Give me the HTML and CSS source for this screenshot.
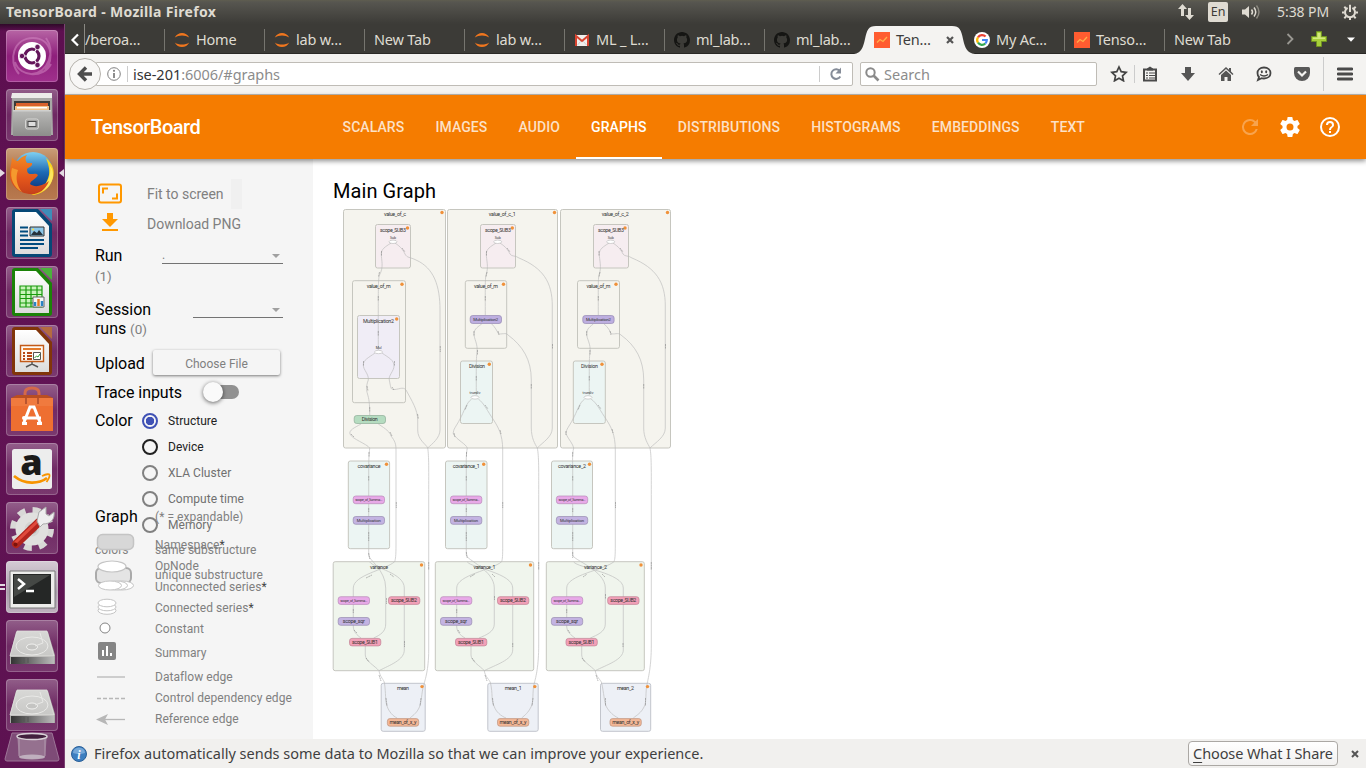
FILE: index.html
```html
<!DOCTYPE html>
<html lang="en">
<head>
<meta charset="utf-8">
<title>TensorBoard - Mozilla Firefox</title>
<link rel="stylesheet" href="styles.css">
</head>
<body>
<svg class="defs" width="0" height="0">
  <defs>
    <linearGradient id="fileGrad" x1="0" y1="0" x2="0" y2="1"><stop offset="0" stop-color="#b9b9b7"/><stop offset="1" stop-color="#8d8d8b"/></linearGradient>
    <linearGradient id="fxGlobe" x1="0" y1="0" x2="0" y2="1"><stop offset="0" stop-color="#7fd0f2"/><stop offset=".5" stop-color="#1e6bb5"/><stop offset="1" stop-color="#0b2f75"/></linearGradient>
    <linearGradient id="fxFox" x1="0" y1="0" x2="0" y2="1"><stop offset="0" stop-color="#f08a24"/><stop offset=".6" stop-color="#e4561b"/><stop offset="1" stop-color="#c5401a"/></linearGradient>
    <linearGradient id="page" x1="0" y1="0" x2="0" y2="1"><stop offset="0" stop-color="#fff"/><stop offset="1" stop-color="#dcdcdc"/></linearGradient>
    <linearGradient id="disk" x1="0" y1="0" x2="0" y2="1"><stop offset="0" stop-color="#dededc"/><stop offset="1" stop-color="#bdbdbb"/></linearGradient>
    <linearGradient id="diskFront" x1="0" y1="0" x2="1" y2="0"><stop offset="0" stop-color="#333"/><stop offset="1" stop-color="#bbb"/></linearGradient>
    <linearGradient id="driveTop" x1="0" y1="0" x2="0" y2="1"><stop offset="0" stop-color="#d8d8d6"/><stop offset="1" stop-color="#c8c8c6"/></linearGradient>
    <symbol id="jupyter" viewBox="0 0 16 16"><path d="M.8 5.6C3.600-.4 12.400-.4 15.200 5.600 11.500 2.900 4.500 2.900.8 5.600zM.8 10.400c2.800 6 11.600 6 14.400 0-3.700 2.700-10.700 2.700-14.400 0z" fill="#f0761e"/></symbol>
    <symbol id="github" viewBox="0 0 16 16"><path fill="#151513" d="M8 0C3.580 0 0 3.580 0 8c0 3.540 2.290 6.530 5.470 7.590.4.070.55-.17.55-.38 0-.19-.01-.82-.01-1.490-2.010.37-2.530-.49-2.690-.94-.09-.23-.48-.94-.82-1.130-.28-.15-.68-.52-.01-.53.63-.01 1.080.58 1.230.82.72 1.210 1.870.87 2.330.66.07-.52.28-.87.51-1.070-1.780-.2-3.640-.89-3.640-3.950 0-.87.31-1.590.82-2.150-.08-.2-.36-1.020.08-2.120 0 0 .67-.21 2.200.82a7.400 7.400 0 0 1 4 0c1.530-1.040 2.200-.82 2.200-.82.44 1.100.16 1.920.08 2.120.51.56.82 1.270.82 2.150 0 3.070-1.870 3.750-3.650 3.950.29.25.54.73.54 1.480 0 1.070-.01 1.930-.01 2.200 0 .21.15.46.55.38A8 8 0 0 0 16 8c0-4.420-3.580-8-8-8z"/></symbol>
    <symbol id="tb" viewBox="0 0 16 16"><path d="M0 0h16v16H0z" fill="#ff5c30"/><path d="M3 10.500l3-3 3 2 4-4.500" fill="none" stroke="#ffb04a" stroke-width="1.300"/></symbol>
    <symbol id="drive" viewBox="0 0 52 52"><path d="M10 12h32l7 23v9H4v-9z" fill="#aaa9a7"/><path d="M11 11h30l7 25H4z" fill="url(#driveTop)" stroke="#e2e2e0" stroke-width=".8"/><path d="M5 37h43v7H5z" fill="url(#diskFront)"/><ellipse cx="26" cy="26" rx="16" ry="9" fill="none" stroke="#e9e9e7"/><ellipse cx="26" cy="27" rx="5.500" ry="3" fill="#c4c4c2" stroke="#f0f0ee"/><path d="M34 13l3 10-8 3" fill="none" stroke="#e9e9e7"/><path d="M18 38v5m4-5v5" stroke="#555"/></symbol>
  </defs>
</svg>

<header class="menubar">
  <span class="win-title">TensorBoard - Mozilla Firefox</span>
  <div class="indicators">
    <svg class="i-net" width="18" height="18" viewBox="0 0 18 18"><path d="M5.500 1L1 6h3v7h3V6h3zM12.500 17l4.500-5h-3V5h-3v7H8z" fill="#dfdbd2"/></svg>
    <span class="lang">En</span>
    <svg class="i-vol" width="20" height="16" viewBox="0 0 20 16"><path d="M1 5.500h3L8 2v12L4 10.500H1z" fill="#dfdbd2"/><path d="M10.500 5.500q2 2.500 0 5M13 3.500q3.500 4.500 0 9" fill="none" stroke="#dfdbd2" stroke-width="1.500"/><path d="M15.500 1.500q5 6.500 0 13" fill="none" stroke="#8c8980" stroke-width="1.400"/></svg>
    <span class="clock">5:38 PM</span>
    <svg class="i-gear" width="16" height="16" viewBox="0 0 16 16"><g stroke="#dfdbd2" fill="none"><path d="M5.600 3.800a5 5 0 1 0 4.800 0" stroke-width="2"/><path d="M8 .8V8" stroke-width="2"/><path d="M0 8.500h2.500M13.500 8.500H16M2.300 14.200l1.900-1.900M13.700 14.200l-1.900-1.900M2.300 2.800l1.900 1.900M13.700 2.800l-1.900 1.900M8 13.500V16" stroke-width="2"/></g></svg>
  </div>
</header>

<div class="desktop">
<nav class="launcher">
  <div class="tile t-dash"><svg viewBox="0 0 52 52"><path d="M13 44C1 30 8 8 27 8s22 22 12 32M45 34C38 48 14 48 9 32M40 8c10 14 2 34-14 36" fill="none" stroke="#d58cc5" stroke-width="2" opacity=".5"/><circle cx="26" cy="26" r="14" fill="#fff"/><circle cx="26" cy="26" r="7" fill="none" stroke="#63155a" stroke-width="3.200"/><path d="M26 26L14 26M26 26l7 11M26 26l7-11" stroke="#fff" stroke-width="1.200"/><g fill="#63155a" stroke="#fff" stroke-width=".7"><circle cx="16" cy="26" r="2.700"/><circle cx="31.500" cy="17" r="2.700"/><circle cx="31.500" cy="35" r="2.700"/></g></svg></div>
  <div class="tile"><svg viewBox="0 0 52 52"><path d="M6 5h40l1 41H5z" fill="#a8a8a6"/><path d="M6 4h40v5H5z" fill="#ecebe9"/><path d="M8 12h36v10H8z" fill="#3b3b39"/><path d="M10 14h32v8H10z" fill="#d9622d"/><path d="M9 17h34v5H9z" fill="#f2c28a"/><path d="M11 18h30v1.500H11z" fill="#fff"/><path d="M7 21h38v26H7z" fill="url(#fileGrad)"/><path d="M7 21h38v1.500H7z" fill="#d0d0ce"/><rect x="19.500" y="30" width="13" height="10" rx="2" fill="#a5a5a3" stroke="#d4d4d2"/><rect x="22" y="32.500" width="8" height="5" fill="#ddd" stroke="#4b4b4b"/></svg></div>
  <div class="tile t-fx"><svg viewBox="0 0 52 52"><circle cx="27" cy="24" r="20" fill="url(#fxGlobe)"/><path d="M40 10c7 6 9 13 7 20-3 10-11 17-22 17 12-5 16-12 18-20 1-6-1-12-3-17z" fill="#fbd31c"/><path d="M44 18c2 11-4 21-15 27 12-1 18-10 18-18 0-4-1-7-3-9z" fill="#fff07a" opacity=".7"/><path d="M6 9c1 2 3 4 6 4 2-3 5-5 9-6-2 3-2 5 0 8h5c1 3-3 4-5 6 0 3 1 5 4 5 3 0 5-1 7 1-3 5-7 5-8 9 5 4 12 2 19-3-4 10-11 14-20 13C9 44 3 34 4 24c0-6 2-10 2-15z" fill="url(#fxFox)"/><path d="M6 20c-3 10 2 20 10 24-5-6-7-14-4-22z" fill="#f59a2e"/></svg></div>
  <div class="tile"><svg viewBox="0 0 52 52"><path d="M9 2h23l14 15v30a3 3 0 0 1-3 3H9a3 3 0 0 1-3-3V5a3 3 0 0 1 3-3z" fill="#064876"/><path d="M9 5h21l13 14v28H9z" fill="url(#page)"/><path d="M34 2h12v12z" fill="#3e8db8"/><g stroke="#004c7f" stroke-width="1.800"><path d="M14 20.500h8M14 24.500h8M14 28.500h8M14 33h24M14 37h24M14 41h18"/></g><path d="M24 20h14v9H24z" fill="#8cc7e8" stroke="#333"/><path d="M25 28l3-4 3 2 2-3 4 5z" fill="#26323b"/><circle cx="27" cy="22.500" r="1" fill="#ffde3b"/></svg></div>
  <div class="tile"><svg viewBox="0 0 52 52"><path d="M9 2h23l14 15v30a3 3 0 0 1-3 3H9a3 3 0 0 1-3-3V5a3 3 0 0 1 3-3z" fill="#1b8208"/><path d="M9 5h21l13 14v28H9z" fill="url(#page)"/><path d="M34 2h12v12z" fill="#4bb13c"/><path d="M14 20h22v21H14z" fill="#c9f3bb"/><path d="M14 20h22v21H14zM14 24h22M14 28.500h22M14 32.500h22M14 37h22M20 20v21M25 20v21M31 20v21" fill="none" stroke="#189a0c" stroke-width="1.200"/><path d="M27 31h11v10H27z" fill="#f7f7f7" stroke="#666"/><path d="M29 40v-4M36 40v-5" stroke="#2b83c4" stroke-width="2.500"/><path d="M32.500 40v-7" stroke="#e47a24" stroke-width="2.500"/></svg></div>
  <div class="tile"><svg viewBox="0 0 52 52"><path d="M9 2h23l14 15v30a3 3 0 0 1-3 3H9a3 3 0 0 1-3-3V5a3 3 0 0 1 3-3z" fill="#81350a"/><path d="M9 5h21l13 14v28H9z" fill="url(#page)"/><path d="M34 2h12v12z" fill="#b46b40"/><path d="M14.500 20.500h23v16h-23z" fill="#fffaf3" stroke="#c25a18" stroke-width="1.400"/><path d="M17 24h18" stroke="#e37a2a" stroke-width="2"/><path d="M17 28h2M17 31h2M17 34h2M21 28h5M21 31h5M21 34h5" stroke="#b74916" stroke-width="1.800"/><path d="M27.500 27.500h7v7h-7z" fill="#fff" stroke="#555"/><path d="M28.500 33l2-2 1.500 1 2-3" fill="none" stroke="#2e9a35"/><path d="M26 37v3m-6 2l6-3 6 3" fill="none" stroke="#555" stroke-width="1.500"/></svg></div>
  <div class="tile"><svg viewBox="0 0 52 52"><path d="M19 18V9q0-5 7-5t7 5v9" fill="none" stroke="#d4694a" stroke-width="3"/><path d="M5 14l6-3h30l6 3z" fill="#b94e22"/><path d="M5 14h42v33H5z" fill="#ee6f31"/><path d="M5 14h42v8H5z" fill="#f07a3e"/><path d="M20 14v6M32 14v6" stroke="#b9552f" stroke-width="2"/><path d="M17.500 39.500L24 23h4l6.500 16.500" fill="none" stroke="#fff" stroke-width="3"/><path d="M16 39.500h5M31 39.500h5M18 34h17" stroke="#fff" stroke-width="3"/><circle cx="18" cy="34" r="2" fill="#fff"/></svg></div>
  <div class="tile"><svg viewBox="0 0 52 52"><rect x="6" y="6" width="40" height="40" rx="2.500" fill="#ededed"/><text x="25.500" y="32" class="amazon-a">a</text><path d="M8 33c11 9 25 8 33 2" fill="none" stroke="#f79400" stroke-width="2.800"/><path d="M36 33q7-3 7.500-1t-3 7" fill="none" stroke="#f79400" stroke-width="1.800"/></svg></div>
  <div class="tile"><svg viewBox="0 0 52 52"><circle cx="26" cy="27" r="18.500" fill="none" stroke="#d8d8d6" stroke-width="7" stroke-dasharray="7.500 7.030"/><circle cx="26" cy="27" r="12" fill="#d4d4d2" stroke="#e0e0de" stroke-width="9"/><circle cx="26" cy="27" r="5" fill="#ababa9"/><path d="M10 42l23-22" stroke="#b3251d" stroke-width="8" stroke-linecap="round"/><path d="M10 40l22-21" stroke="#e04a3c" stroke-width="3" stroke-linecap="round"/><path d="M31 19l2-9 7-5v7l3 2 5-4c1 7-3 12-11 12l-3 3z" fill="#eee" stroke="#aaa"/><circle cx="9.500" cy="42.500" r="2" fill="#7b120c"/></svg></div>
  <div class="tile t-term"><svg viewBox="0 0 52 52"><path d="M4 10h45v37H4z" fill="#ededeb" stroke="#777"/><path d="M7 13h38v30H7z" fill="#252726"/><path d="M8 14h36l-36 22z" fill="#454845"/><path d="M12 18l6 5-6 5M20 30h8" fill="none" stroke="#fff" stroke-width="2.500"/></svg></div>
  <div class="tile"><svg viewBox="0 0 52 52"><use href="#drive"/></svg></div>
  <div class="tile"><svg viewBox="0 0 52 52"><use href="#drive"/></svg></div>
  <svg class="trash" width="56" height="30" viewBox="0 0 56 30"><path d="M8 1h40l7 26q0 2-2 2H3q-2 0-2-2z" fill="#7e4b77" stroke="#9d7597"/><path d="M13 4h30l-2 21q-13 4-26 0z" fill="#95718f"/><ellipse cx="28" cy="4.500" rx="15" ry="3" fill="#41203d" stroke="#d9d2d8" stroke-width="1.500"/><path d="M15 7v17M41 7v17" stroke="#c0adbd" opacity=".7"/><ellipse cx="28" cy="25" rx="13" ry="2.500" fill="#d2cbd1" opacity=".7"/></svg>
  <i class="pip pip-l"></i><i class="pip pip-r"></i><i class="pip2"></i>
</nav>

<div class="browser">
  <div class="tabs">
    <div class="tab-scroll"><svg width="10" height="14" viewBox="0 0 10 14"><path d="M8 1.500L2.500 7 8 12.500" fill="none" stroke="#fff" stroke-width="2.200"/></svg></div>
    <div class="tab first"><span>/beroa…</span></div>
    <div class="tab"><svg width="16" height="16"><use href="#jupyter"/></svg><span>Home</span></div>
    <div class="tab"><svg width="16" height="16"><use href="#jupyter"/></svg><span>lab w…</span></div>
    <div class="tab"><span>New Tab</span></div>
    <div class="tab"><svg width="16" height="16"><use href="#jupyter"/></svg><span>lab w…</span></div>
    <div class="tab"><svg width="16" height="16" viewBox="0 0 16 16"><path d="M1 3h14v11H1z" fill="#f0efed"/><path d="M2 14V4l6 5 6-5v10" fill="none" stroke="#d8432f" stroke-width="2"/><path d="M3.500 13l3.500-4M12.500 13L9 9" stroke="#ccc"/></svg><span>ML _ L…</span></div>
    <div class="tab"><svg width="16" height="16"><use href="#github"/></svg><span>ml_lab…</span></div>
    <div class="tab nosep"><svg width="16" height="16"><use href="#github"/></svg><span>ml_lab…</span></div>
    <div class="tab active nosep">
      <svg class="tab-shape" width="122" height="29" viewBox="0 0 122 29"><path d="M0 28C7 27 9 22 11 13 13 4 14 0 22 0H98c8 0 9 4 11 13 2 9 4 14 12 15v1H0z" fill="#f4f3f1"/></svg>
      <svg width="16" height="16"><use href="#tb"/></svg><span>Ten…</span>
      <svg class="close" width="8" height="8" viewBox="0 0 8 8"><path d="M1 1l6 6M7 1L1 7" stroke="#555" stroke-width="2.200"/></svg>
    </div>
    <div class="tab"><svg width="16" height="16" viewBox="0 0 16 16"><circle cx="8" cy="8" r="8" fill="#fff"/><g fill="none" stroke-width="2.200"><path d="M4 5.300a4.800 4.800 0 0 1 7.600-.7" stroke="#ea4335"/><path d="M4 5.300a4.800 4.800 0 0 0 0 5.400" stroke="#fbbc05"/><path d="M4 10.700a4.800 4.800 0 0 0 7.300.8" stroke="#34a853"/><path d="M11.300 11.500A4.800 4.800 0 0 0 12.800 8H8" stroke="#4285f4"/></g></svg><span>My Ac…</span></div>
    <div class="tab"><svg width="16" height="16"><use href="#tb"/></svg><span>Tenso…</span></div>
    <div class="tab nosep"><span>New Tab</span></div>
    <div class="tab-tools">
      <svg width="8" height="12" viewBox="0 0 8 12"><path d="M1.500 1l5 5-5 5" fill="none" stroke="#9a9892" stroke-width="1.800"/></svg>
      <svg class="plus" width="16" height="16" viewBox="0 0 16 16"><path d="M5.500.5h5v5h5v5h-5v5h-5v-5h-5v-5h5z" fill="#a7cf3a" stroke="#6f9121"/><path d="M6.500 2h3v4.500H14v1.500H2V6.500h4.500z" fill="#d3ea7c"/></svg>
      <svg width="8" height="5" viewBox="0 0 8 5"><path d="M0 .5h8L4 4.800z" fill="#fff"/></svg>
    </div>
  </div>

  <div class="toolbar">
    <div class="back"><svg width="16" height="16" viewBox="0 0 16 16"><path d="M9 1.500L2.500 8 9 14.500M3 8h12" fill="none" stroke="#4d4d4d" stroke-width="3.400"/></svg></div>
    <div class="urlbar">
      <svg width="14" height="14" viewBox="0 0 14 14"><circle cx="7" cy="7" r="6.300" fill="none" stroke="#808080"/><path d="M7 6v5" stroke="#808080" stroke-width="1.800"/><circle cx="7" cy="3.800" r="1.100" fill="#808080"/></svg>
      <i class="bar"></i>
      <span class="url"><b>ise-201</b>:6006/#graphs</span>
      <i class="bar bar2"></i>
      <svg width="14" height="14" viewBox="0 0 14 14"><path d="M11 4.200A4.800 4.800 0 1 0 11.300 9.500" fill="none" stroke="#858c98" stroke-width="2"/><path d="M12 .5V6.500H6.500z" fill="#858c98"/></svg>
    </div>
    <div class="search"><svg width="15" height="15" viewBox="0 0 15 15"><circle cx="5.500" cy="5.500" r="4.200" fill="none" stroke="#8a8a8a" stroke-width="2"/><path d="M8.500 8.500l5 5" stroke="#8a8a8a" stroke-width="2.600"/></svg><span>Search</span></div>
    <div class="tools">
      <svg width="18" height="17" viewBox="0 0 18 17"><path d="M9 2l2.200 4.700 5 .6-3.700 3.500 1 5L9 13.300l-4.500 2.500 1-5L1.800 7.300l5-.6z" fill="none" stroke="#444" stroke-width="1.700"/></svg>
      <i class="bar"></i>
      <svg width="16" height="16" viewBox="0 0 16 16"><path d="M2 3.500h12v11H2z" fill="none" stroke="#4a4a4a" stroke-width="2"/><path d="M5 2.500L8 .5l3 2v2H5z" fill="#4a4a4a"/><path d="M4 7h2M4 9.500h2M4 12h2M7 7h6M7 9.500h6M7 12h6" stroke="#4a4a4a" stroke-width="1.100"/></svg>
      <svg width="16" height="16" viewBox="0 0 16 16"><path d="M5 1h6v6h4l-7 8-7-8h4z" fill="#555"/></svg>
      <svg width="16" height="16" viewBox="0 0 16 16"><path d="M8 1L.5 8l1 1L8 3l6.500 6 1-1L13 5.500V2h-2v1.700zM3 9l5-4.600L13 9v6H9.500v-4h-3v4H3z" fill="#555"/></svg>
      <svg width="16" height="16" viewBox="0 0 16 16"><path d="M8 1.500c4 0 6.500 2.400 6.500 5.500S12 12.500 8 12.500c-1 0-2 0-2.500-.3L2 14l1-3C1.800 10 1.500 8.500 1.500 7 1.500 4 4 1.500 8 1.500z" fill="none" stroke="#444" stroke-width="1.800"/><ellipse cx="5.800" cy="5.800" rx="1" ry="1.500" fill="#444"/><ellipse cx="10.200" cy="5.800" rx="1" ry="1.500" fill="#444"/><path d="M4 8.500q4 3 8 0" fill="none" stroke="#444" stroke-width="1.500"/></svg>
      <svg width="16" height="14" viewBox="0 0 16 14"><path d="M1.500 0h13Q16 0 16 1.500V6a8 8 0 0 1-16 0V1.500Q0 0 1.500 0z" fill="#585858"/><path d="M4 4.500l4 4 4-4" fill="none" stroke="#f4f3f1" stroke-width="2.200"/></svg>
      <i class="bar tall"></i>
      <svg width="16" height="14" viewBox="0 0 16 14"><path d="M1 2h14M1 7h14M1 12h14" stroke="#4a4a4a" stroke-width="2.800" stroke-linecap="round"/></svg>
    </div>
  </div>

  <div class="tb-header">
    <span class="brand">TensorBoard</span>
    <div class="tb-tabs">
      <span>SCALARS</span><span>IMAGES</span><span>AUDIO</span><span class="on">GRAPHS</span><span>DISTRIBUTIONS</span><span>HISTOGRAMS</span><span>EMBEDDINGS</span><span>TEXT</span>
    </div>
    <div class="tb-icons">
      <svg width="24" height="24" viewBox="0 0 24 24" opacity=".3"><path fill="#fff" d="M17.650 6.350A7.960 7.960 0 0 0 12 4a8 8 0 1 0 7.730 10h-2.080A6 6 0 1 1 12 6c1.660 0 3.140.69 4.220 1.780L13 11h7V4z"/></svg>
      <svg width="24" height="24" viewBox="0 0 24 24"><path fill="#fff" d="M19.430 12.980c.04-.32.070-.64.070-.98s-.03-.66-.07-.98l2.110-1.650c.19-.15.24-.42.12-.64l-2-3.460c-.12-.22-.39-.3-.61-.22l-2.490 1c-.52-.4-1.080-.73-1.690-.98l-.38-2.650A.49.49 0 0 0 14 2h-4c-.25 0-.46.18-.49.42l-.38 2.650c-.61.25-1.170.59-1.690.98l-2.490-1c-.23-.09-.49 0-.61.22l-2 3.460c-.13.22-.07.49.12.64l2.110 1.650c-.04.32-.07.65-.07.98s.03.66.07.98l-2.110 1.650c-.19.15-.24.42-.12.640l2 3.460c.12.22.39.3.61.22l2.490-1c.52.4 1.080.73 1.690.98l.38 2.650c.03.24.24.42.49.42h4c.25 0 .46-.18.49-.42l.38-2.650c.61-.25 1.170-.59 1.690-.98l2.490 1c.23.09.49 0 .61-.22l2-3.460c.12-.22.07-.49-.12-.64zM12 15.500a3.500 3.500 0 1 1 0-7 3.500 3.500 0 0 1 0 7z"/></svg>
      <svg width="24" height="24" viewBox="0 0 24 24"><path fill="#fff" d="M11 18h2v-2h-2v2zm1-16a10 10 0 1 0 0 20 10 10 0 0 0 0-20zm0 18a8 8 0 1 1 0-16 8 8 0 0 1 0 16zm0-14a4 4 0 0 0-4 4h2a2 2 0 1 1 4 0c0 2-3 1.750-3 5h2c0-2.250 3-2.500 3-5a4 4 0 0 0-4-4z"/></svg>
    </div>
  </div>

  <div class="content">
    <aside class="side">
      <div class="act"><svg width="30" height="30" viewBox="0 0 30 30"><rect x="4" y="5.500" width="22" height="18" rx="2" fill="none" stroke="#ff9800" stroke-width="2"/><path d="M8 14.500V9.500h5M22 14.500v5h-5" fill="none" stroke="#ff9800" stroke-width="2"/></svg><span>Fit to screen</span><i></i></div>
      <div class="act"><svg width="30" height="30" viewBox="0 0 30 30"><path d="M12 4h6v6h5l-8 8-8-8h5zM7 20h16v2H7z" fill="#ff9800"/></svg><span>Download PNG</span></div>
      <div class="field run"><div class="lab">Run<br><small>(1)</small></div><div class="drop w121"><span>.</span><svg width="8" height="4"><path d="M0 0h8L4 4z" fill="#a0a0a0"/></svg></div></div>
      <div class="field sess"><div class="lab">Session<br>runs <small>(0)</small></div><div class="drop w90"><span></span><svg width="8" height="4"><path d="M0 0h8L4 4z" fill="#a0a0a0"/></svg></div></div>
      <div class="field upload"><div class="lab">Upload</div><div class="choose">Choose File</div></div>
      <div class="field trace"><div class="lab">Trace inputs</div><div class="toggle"></div></div>
      <div class="field color"><div class="lab">Color</div>
        <ul class="radios"><li class="sel">Structure</li><li class="dev">Device</li><li>XLA Cluster</li><li>Compute time</li><li>Memory</li></ul>
      </div>
      <div class="swatches"><span class="colors">colors</span><span class="same">same substructure</span><span class="uniq">unique substructure</span><i></i></div>
      <div class="legend">
        <div class="lr r-title"><b>Graph</b><span>(* = expandable)</span></div>
        <div class="lr"><svg width="60" height="21" viewBox="0 0 60 21"><rect x="2.500" y="-.5" width="36" height="15" rx="5" fill="#d7d7d7" stroke="#c4c4c4" stroke-width="1.500"/></svg><span>Namespace<b>*</b></span></div>
        <div class="lr"><svg width="60" height="21" viewBox="0 0 60 21"><ellipse cx="17" cy="10.500" rx="14" ry="5.500" fill="#fff" stroke="#c4c4c4" stroke-width="1.200"/></svg><span>OpNode</span></div>
        <div class="lr"><svg width="60" height="21" viewBox="0 0 60 21"><g fill="#fff" stroke="#c4c4c4"><ellipse cx="27" cy="8.500" rx="11.500" ry="4.500"/><ellipse cx="21" cy="8.500" rx="11.500" ry="4.500"/><ellipse cx="15" cy="8.500" rx="11.500" ry="4.500"/></g></svg><span>Unconnected series<b>*</b></span></div>
        <div class="lr"><svg width="60" height="21" viewBox="0 0 60 21"><g fill="#fff" stroke="#c4c4c4"><ellipse cx="12" cy="12.500" rx="9" ry="3.800"/><ellipse cx="12" cy="9" rx="9" ry="3.800"/><ellipse cx="12" cy="5" rx="9" ry="3.800"/></g></svg><span>Connected series<b>*</b></span></div>
        <div class="lr"><svg width="60" height="21" viewBox="0 0 60 21"><circle cx="10" cy="9" r="5" fill="#fff" stroke="#848484"/></svg><span>Constant</span></div>
        <div class="lr tallrow"><svg width="60" height="24" viewBox="0 0 60 24"><rect x="3" y="2" width="18" height="18" rx="2" fill="#858585"/><path d="M8 16v-6M12 16V6M16 16v-3" stroke="#fff" stroke-width="2"/></svg><span>Summary</span></div>
        <div class="lr tallrow"><svg width="60" height="24" viewBox="0 0 60 24"><path d="M2 13h28" stroke="#b7b7b7" stroke-width="1.300"/></svg><span>Dataflow edge</span></div>
        <div class="lr"><svg width="60" height="21" viewBox="0 0 60 21"><path d="M2 10.500h28" stroke="#b7b7b7" stroke-width="1.300" stroke-dasharray="4 2"/></svg><span>Control dependency edge</span></div>
        <div class="lr"><svg width="60" height="21" viewBox="0 0 60 21"><path d="M8 10.500h22" stroke="#b7b7b7" stroke-width="1.300"/><path d="M1 10.500l12-5.500-3 5.500 3 5.500z" fill="#b7b7b7"/></svg><span>Reference edge</span></div>
      </div>
    </aside>

    <main class="graph">
      <h1>Main Graph</h1>
      <svg class="canvas" width="1053" height="534" viewBox="313 205 1053 534">
        <g class="box root"><rect x="343.500" y="209.500" width="102" height="238.500" rx="2"/><rect x="447.500" y="209.500" width="110" height="238.500" rx="2"/><rect x="560.500" y="209.500" width="110" height="238.500" rx="2"/></g>
        <g class="box pink"><rect x="375.500" y="224.500" width="35" height="43.500" rx="2"/><rect x="480.500" y="224.500" width="35" height="43.500" rx="2"/><rect x="593.500" y="224.500" width="35" height="43.500" rx="2"/></g>
        <g class="box root"><rect x="352.500" y="280.700" width="53" height="122" rx="2"/><rect x="465.300" y="280.700" width="41.400" height="67.600" rx="2"/><rect x="577.500" y="280.700" width="42" height="67.600" rx="2"/></g>
        <rect class="box lilac" x="357.500" y="315.500" width="42" height="63" rx="2"/>
        <g class="box teal"><rect x="460.500" y="361" width="32" height="62.500" rx="2"/><rect x="573.300" y="361" width="32" height="62.500" rx="2"/><rect x="348.300" y="461" width="41.300" height="87.700" rx="2"/><rect x="445.500" y="461" width="41.500" height="87.700" rx="2"/><rect x="551.500" y="461" width="41" height="87.700" rx="2"/></g>
        <g class="box green"><rect x="333.200" y="561.700" width="91.500" height="109" rx="2"/><rect x="435.300" y="561.700" width="98.400" height="109" rx="2"/><rect x="546.300" y="561.700" width="98" height="109" rx="2"/></g>
        <g class="box blue"><rect x="381.200" y="683.300" width="44" height="48" rx="2"/><rect x="487.800" y="683.300" width="50.400" height="48" rx="2"/><rect x="600.500" y="683.300" width="50.200" height="48" rx="2"/></g>

        <g class="edges">
          <path d="M391 243C385 247 381.300 249 381.300 254 381.300 260 384 267 379.500 275 378 279 378.300 290 378.300 350M395 243C401 247 403 250 405 254 407 258 410 257 416 260 434 268 440 286 440 310V430C440 438 432 444 427.700 448 429 456 428.700 470 428.700 500V650C428.700 670 425 680 424 684 421 694 422 702 419 708 416 714 412 716 410 718"/>
          <path d="M375 353C368 358 363.300 360 363.300 365 363.300 370 369 374 368.300 380 366 386 366.300 390 367.500 394 369 399 369.700 403 369.700 415M382 353C389 358 394 360 394 366 394 371 388 376 389.300 380 391 389 391 389 393 389.500 398 390 403 386 406 390 412 401 417.700 410 417.700 420V430C417.700 440 426 444 427.700 448"/>
          <path d="M361 424C354 428 349 430 350 434 352 439 367 444 369.700 448 369 455 368.700 460 368.700 470V555C368.700 560 385.700 570 385.700 588V624C385.700 632 380 635 373.700 638M369.700 562C374 568 404.300 573 404.300 588V650C404.300 660 390 665 379 670.700M378.300 424C386 429 390 432 391 436 395 441 396 444 396 450V545C396 556 395.500 559 394.700 561.700 385 570 353.300 575 353.300 588V626C353.300 632 357 635 361 638M365.300 646V655C365.300 661 375 666 379 670.700 380 677 384 680 384.500 683 386 694 385 700 387 706 389 712 393 716 397 718"/>
          <path d="M496 243C490 247 486.300 249 486.300 254 486.300 260 489 267 486 275 485 279 485.300 290 485.300 315M500 243C506 247 508 250 510 254 512 257 515 255 519 258 543 268 552.300 282 552.300 306V428C552.300 437 543 442 537.300 448 539 456 538.700 470 538.700 500V645C538.700 666 536 677 534.300 683 532 692 534 702 531 707 528 713 525 715 521.700 718"/>
          <path d="M481.700 324C476 328 474 330 474 334 474 339 478 344 477 352 476 358 476.300 375 476.300 395M491.700 324C495 327 497 331 498.300 333.500 501 335 506 332 508 335 523 346 531.300 360 531.300 380V428C531.300 438 535 444 537.300 448"/>
          <path d="M471.700 399C466 403 464 412 460 419 456 427 453 429 453.300 434 457 440 466 444 467.300 448 466 455 466.300 460 466.300 470V555C466.300 560 494.300 570 494.300 588V624C494.300 632 486 635 479 638M467.300 562C472 568 512.700 573 512.700 588V650C512.700 660 495 665 484.300 670.700M478.300 399C484 403 488 412 493 419 498 427 502.700 434 502.700 450V545C502.700 556 502.500 559 501.700 561.700 492 570 456.700 575 456.700 588V626C456.700 632 460 635 465 638M471 646V655C471 661 480 666 484.300 670.700 485 677 490 680 490.500 683 493 694 491 700 494 706 496 712 501 716 506 718"/>
          <path d="M609 243C603 247 599.300 249 599.300 254 599.300 260 602 267 599 275 598 279 598.300 290 598.300 315M613 243C619 247 621 250 623 254 625 257 628 255 632 258 656 268 665.300 282 665.300 306V428C665.300 437 656 442 650 448 651.500 456 651.300 470 651.300 500V645C651.300 666 648.500 677 647.300 683 645 692 647 702 644 707 641 713 637 715 633.300 718"/>
          <path d="M593.300 324C588 328 586.700 330 586.700 334 586.700 339 591 344 590 352 589 358 589.300 375 589.300 395M604 324C608 327 610 331 611 333.500 614 335 618 332 621 335 636 346 643.700 360 643.700 380V428C643.700 438 648 444 650 448"/>
          <path d="M584.700 399C579 403 577 412 573 419 569 427 566 429 566 434 569 440 573 444 573.700 448 572 455 572.700 460 572.700 470V555C572.700 560 605.300 570 605.300 588V624C605.300 632 597 635 590.300 638M573.700 562C578 568 623.300 573 623.300 588V650C623.300 660 606 665 595.300 670.700M591 399C597 403 601 412 606 419 611 427 615.300 434 615.300 450V545C615.300 556 615 559 614 561.700 604 570 566.700 575 566.700 588V626C566.700 632 571 635 575 638M581.700 646V655C581.700 661 591 666 595.300 670.700 596 677 601 680 601.700 683 604 694 604 700 606 706 609 712 614 716 618.300 718"/>
        </g>
        <g class="ticks">
          <path d="M381.500 251v5M379.500 272l-1 5M378.300 296v5M378.300 331v5M402 248l3 4M440.300 346v6M363.500 361v5M394.500 361v5M367 386l1 5M369.700 407v5M392 387l2 3M417.500 414l1 5M351 434l3 3M390 432l2 4M369 452v5M368.700 476v5M368.700 508v4M368.700 532v9M368.700 553l1 6M396.300 502v6M428.700 562v8M366 578l6-3M390 574l4 3M353.300 609v4M386.500 598v6M354 630l3 3M404.500 641v6M366 658l3 4M379 675l2 6M386 698l1 8M421 698l-1 8"/>
          <path d="M486.500 251v5M487 272l-1 5M485.300 296v5M507 248l3 4M552.500 344v5M474 331v5M477.500 350v5M498 331l1 4M531.300 384v5M476.300 376v5M467 405l-2 5M485 405l3 4M454 433l1 4M500 430l1 4M466.500 452v5M466.300 476v5M466.300 508v4M466.300 532v9M466.300 552l1 6M502.700 502v6M538.700 562v8M470 577l5-3M492 574l3 3M456.700 609v4M494.500 596v4M458 630l2 3M512.700 643v4M472 658l3 4M485 675l2 6M492.500 698l1 8M533 698l-1 8"/>
          <path d="M599 251v5M600 272l-1 5M598.300 296v5M620 248l3 4M665.500 344v5M586.700 331v5M590 350v5M610 331l1 4M643.700 384v5M589.300 376v5M580 405l-2 5M598 405l3 4M566 431v4M612 429l1 4M572.700 452v5M572.700 476v5M572.700 508v4M572.700 532v9M572.700 552v6M615.500 502v6M651.300 562v8M583 577l4-3M602 574l3 3M566.700 609v4M605.500 594v5M568 630l2 3M623 643v4M582 658l3 4M596 675l2 6M605.500 698v8M645.500 698v8"/>
        </g>
        <g class="ops"><ellipse cx="393" cy="241.800" rx="4" ry="1.700"/><ellipse cx="497.700" cy="241.800" rx="4" ry="1.700"/><ellipse cx="610.700" cy="241.800" rx="4" ry="1.700"/><ellipse cx="378.500" cy="352" rx="4" ry="1.700"/><ellipse cx="475" cy="397.400" rx="4" ry="1.700"/><ellipse cx="588" cy="397.400" rx="4" ry="1.700"/></g>

        <rect class="pill p-green" x="354.200" y="415.500" width="31.300" height="8" rx="2.500"/>
        <g class="pill p-purple"><rect x="470.200" y="315.500" width="31.300" height="8" rx="2.500"/><rect x="582.800" y="315.500" width="31.300" height="8" rx="2.500"/></g>
        <g class="pill p-mag"><rect x="353.200" y="496" width="31.300" height="7.700" rx="2.500"/><rect x="450.500" y="496" width="31.300" height="7.700" rx="2.500"/><rect x="556.400" y="496" width="31.300" height="7.700" rx="2.500"/><rect x="338.200" y="596.700" width="31.300" height="7.700" rx="2.500"/><rect x="440.500" y="596.700" width="31.300" height="7.700" rx="2.500"/><rect x="551.400" y="596.700" width="31.300" height="7.700" rx="2.500"/></g>
        <g class="pill p-lav"><rect x="353.200" y="516.500" width="31.300" height="7.800" rx="2.500"/><rect x="450.500" y="516.500" width="31.300" height="7.800" rx="2.500"/><rect x="556.400" y="516.500" width="31.300" height="7.800" rx="2.500"/><rect x="338.200" y="617.500" width="31.300" height="7.800" rx="2.500"/><rect x="440.500" y="617.500" width="31.300" height="7.800" rx="2.500"/><rect x="551.400" y="617.500" width="31.300" height="7.800" rx="2.500"/></g>
        <g class="pill p-rose"><rect x="349.500" y="638.400" width="31.300" height="7.500" rx="2.500"/><rect x="455.500" y="638.400" width="31.300" height="7.500" rx="2.500"/><rect x="566" y="638.400" width="31.300" height="7.500" rx="2.500"/><rect x="388.500" y="596.700" width="31.300" height="7.700" rx="2.500"/><rect x="497.500" y="596.700" width="31.300" height="7.700" rx="2.500"/><rect x="607.700" y="596.700" width="31.300" height="7.700" rx="2.500"/></g>
        <g class="pill p-orange"><rect x="387.400" y="718.600" width="31.300" height="7.600" rx="2.500"/><rect x="497.500" y="718.600" width="31.300" height="7.600" rx="2.500"/><rect x="610" y="718.600" width="31.300" height="7.600" rx="2.500"/></g>

        <g class="dots"><circle cx="442" cy="212.500" r="1.700"/><circle cx="554.500" cy="212.500" r="1.700"/><circle cx="667.500" cy="212.500" r="1.700"/><circle cx="407.500" cy="228" r="1.700"/><circle cx="512.300" cy="228" r="1.700"/><circle cx="625" cy="228" r="1.700"/><circle cx="402" cy="284.200" r="1.700"/><circle cx="503.500" cy="284.200" r="1.700"/><circle cx="616" cy="284.200" r="1.700"/><circle cx="396.700" cy="319" r="1.700"/><circle cx="489.300" cy="364.300" r="1.700"/><circle cx="602" cy="364.300" r="1.700"/><circle cx="386.500" cy="464.300" r="1.700"/><circle cx="483.700" cy="464.300" r="1.700"/><circle cx="589.500" cy="464.300" r="1.700"/><circle cx="421.500" cy="565" r="1.700"/><circle cx="530.500" cy="565" r="1.700"/><circle cx="641" cy="565" r="1.700"/><circle cx="422" cy="686.600" r="1.700"/><circle cx="534.800" cy="686.600" r="1.700"/><circle cx="647.500" cy="686.600" r="1.700"/></g>

        <g class="lbl">
          <text x="395" y="215.800" textLength="22">value_of_c</text><text x="502.300" y="215.800" textLength="27">value_of_c_1</text><text x="615.300" y="215.800" textLength="27">value_of_c_2</text>
          <text x="393" y="232" textLength="26">scope_SUB3</text><text x="498" y="232" textLength="26">scope_SUB3</text><text x="611" y="232" textLength="26">scope_SUB3</text>
          <text x="378.700" y="288" textLength="24">value_of_m</text><text x="486" y="288" textLength="24">value_of_m</text><text x="598.500" y="288" textLength="24">value_of_m</text>
          <text x="378.500" y="323" textLength="31">Multiplication2</text>
          <text x="477" y="368" textLength="16">Division</text><text x="589.500" y="368" textLength="17">Division</text>
          <text x="369" y="468" textLength="23">covariance</text><text x="466.300" y="468" textLength="27">covariance_1</text><text x="572" y="468" textLength="28">covariance_2</text>
          <text x="379" y="569" textLength="18">variance</text><text x="484.500" y="569" textLength="22">variance_1</text><text x="595.500" y="569" textLength="23">variance_2</text>
          <text x="403" y="690" textLength="12">mean</text><text x="513.200" y="690" textLength="17">mean_1</text><text x="625.500" y="690" textLength="17">mean_2</text>
          <text x="369.800" y="421.200" textLength="16">Division</text>
          <text x="353.800" y="623" textLength="22">scope_sqr</text><text x="456" y="623" textLength="22">scope_sqr</text><text x="567" y="623" textLength="22">scope_sqr</text>
          <text x="365" y="643.900" textLength="26">scope_SUB1</text><text x="471" y="643.900" textLength="26">scope_SUB1</text><text x="581.500" y="643.900" textLength="26">scope_SUB1</text>
          <text x="404" y="602.300" textLength="26">scope_SUB2</text><text x="513" y="602.300" textLength="26">scope_SUB2</text><text x="623.300" y="602.300" textLength="26">scope_SUB2</text>
          <text x="403" y="724.200" textLength="27">mean_of_x_y</text><text x="513" y="724.200" textLength="27">mean_of_x_y</text><text x="625.700" y="724.200" textLength="27">mean_of_x_y</text>
        </g>
        <g class="lbl sm">
          <text x="485.700" y="321" textLength="25">Multiplication2</text><text x="598.400" y="321" textLength="25">Multiplication2</text>
          <text x="368.800" y="522" textLength="24">Multiplication</text><text x="466" y="522" textLength="24">Multiplication</text><text x="572" y="522" textLength="24">Multiplication</text>
        </g>
        <g class="lbl xs">
          <text x="368.800" y="501" textLength="27">scope_of_Summa…</text><text x="466" y="501" textLength="27">scope_of_Summa…</text><text x="572" y="501" textLength="27">scope_of_Summa…</text><text x="353.800" y="601.800" textLength="27">scope_of_Summa…</text><text x="456" y="601.800" textLength="27">scope_of_Summa…</text><text x="567" y="601.800" textLength="27">scope_of_Summa…</text>
          <text x="393" y="239">Sub</text><text x="497.700" y="239">Sub</text><text x="610.700" y="239">Sub</text><text x="378.700" y="349">Mul</text><text x="475" y="394">truediv</text><text x="588" y="394">truediv</text>
        </g>
      </svg>
    </main>
  </div>

  <footer class="notice">
    <svg width="16" height="16" viewBox="0 0 16 16"><circle cx="8" cy="8" r="7.500" fill="#3d7fc0" stroke="#2a5f97"/><path d="M2 7a6 5.500 0 0 1 12 0q-6 2-12 0z" fill="#8db9e2" opacity=".7"/><text x="8" y="13" class="info-i">i</text></svg>
    <span class="msg">Firefox automatically sends some data to Mozilla so that we can improve your experience.</span>
    <span class="share"><u>C</u>hoose What I Share</span>
    <svg width="8" height="8" viewBox="0 0 8 8"><path d="M1 1l6 6M7 1L1 7" stroke="#555" stroke-width="2"/></svg>
  </footer>
</div>
</div>
</body>
</html>
```
FILE: styles.css
```css
*, *::before, *::after { box-sizing: border-box; }
body { margin: 0; width: 1366px; height: 768px; overflow: hidden; display: flex; flex-direction: column; font-family: "Noto Sans", "Open Sans", sans-serif; background: #fff; }
svg { display: block; flex: none; }
.defs { position: absolute; }

.menubar { height: 24px; flex: none; display: flex; align-items: center; justify-content: space-between; background: linear-gradient(#5f5d4f 0, #575650 2px, #3d3c38 23px); color: #dfdbd2; }
.win-title { font-weight: 700; font-size: 14px; line-height: 24px; padding-left: 6px; letter-spacing: .31px; }
.indicators { display: flex; align-items: center; height: 24px; padding-right: 8px; }
.lang { width: 20px; height: 20px; margin: 0 13px; border-radius: 2px; background: #dfdbd2; color: #3c3b37; font-size: 12.500px; line-height: 20px; text-align: center; }
.clock { font-size: 14px; line-height: 23px; padding-bottom: 1px; margin: 0 13px 0 16px; letter-spacing: -.1px; }

.desktop { flex: 1; display: flex; min-height: 0; }
.launcher { position: relative; width: 65px; flex: none; padding: 6px 0 0 6px; display: flex; flex-direction: column; gap: 7px; background: linear-gradient(#2f0929 0, #5d0f50 7px, #611354 50%, #5d1251); border-right: 1px solid #7b4272; }
.tile { width: 52px; height: 52px; flex: none; border-radius: 4px; background: linear-gradient(rgba(255,255,255,.32), rgba(255,255,255,.1) 50%, rgba(255,255,255,.16)); box-shadow: inset 0 0 0 1px rgba(255,255,255,.22); }
.tile svg { width: 52px; height: 52px; overflow: visible; }
.t-dash { background: linear-gradient(#b765a5, #8e1f7b 50%, #a0308d); }
.t-fx { background: linear-gradient(#c99e79, #ab6a40 50%, #b87a50); }
.t-term { background: linear-gradient(#d5cbd5, #aa9dab 60%, #bfb2bf); }
.amazon-a { font: 800 36px "Open Sans", sans-serif; text-anchor: middle; fill: #1a1a1a; }
.trash { margin: -6px 0 0 -2px; }
.pip { position: absolute; top: 145px; border: 4px solid transparent; }
.pip-l { left: 0; border-left: 5px solid #e3dbe2; border-right: 0; }
.pip-r { right: 0; border-right: 5px solid #e3dbe2; border-left: 0; }
.pip2 { position: absolute; left: 0; top: 560px; width: 5px; height: 6px; border: solid #e3dbe2; border-width: 2px 0; }

.browser { flex: 1; display: flex; flex-direction: column; min-width: 0; }
.tabs { height: 30px; flex: none; display: flex; background: #3c3b37; border-bottom: 1px solid #2a2926; color: #dfdbd2; font-size: 14.500px; }
.tab-scroll { width: 20px; flex: none; padding: 9px 0 0 5px; border-right: 1px solid #8a8983; }
.tab { position: relative; width: 100px; flex: none; display: flex; align-items: center; gap: 6px; padding: 2px 0 0 9px; height: 29px; white-space: nowrap; letter-spacing: -.2px; }
.tab > span { padding-bottom: 2px; }
.tab::after { content: ""; position: absolute; right: 0; top: 5px; width: 1px; height: 22px; background: #76756f; }
.tab.nosep::after { display: none; }
.tab.first { width: 80px; padding-left: 0; overflow: hidden; }
.tab.active { color: #3d3d3d; z-index: 1; }
.tab.active > * { position: relative; }
.tab.active > .tab-shape { position: absolute; left: -11px; top: 2px; height: 29px; }
.tab.active > .close { margin-left: 9px; }
.tab-tools { flex: 1; display: flex; align-items: center; padding: 1px 11px 0 0; justify-content: flex-end; gap: 17px; }
.tab-tools .plus { margin-right: 3px; }

.toolbar { height: 41px; flex: none; display: flex; align-items: center; background: #f4f3f1; border-bottom: 1px solid #bdb9b3; font-size: 14.500px; color: #333; padding: 0 13px 0 4px; }
.back { width: 32px; height: 32px; flex: none; border: 1px solid #b5b2ac; border-radius: 50%; background: #f8f7f6; padding: 7px; z-index: 1; }
.urlbar { width: 757px; height: 24px; flex: none; margin-left: -5px; border: 1px solid #bfbcb6; border-radius: 0 2px 2px 0; background: #fff; display: flex; align-items: center; padding: 0 9px 0 10px; }
.bar { width: 1px; height: 16px; background: #ccc; margin: 0 5px 0 6px; }
.bar2 { margin: 0 9px 0 0; }
.url { flex: 1; color: #8c8c8c; letter-spacing: -.04px; }
.url b { font-weight: 400; color: #333; }
.search { width: 237px; height: 24px; flex: none; margin-left: 7px; border: 1px solid #bfbcb6; border-radius: 2px; background: #fff; display: flex; align-items: center; gap: 4px; padding-left: 4px; color: #8c8c8c; }
.tools { display: flex; align-items: center; padding-left: 13px; }
.tools svg { margin-bottom: 1px; }
.tools svg + svg { margin-left: 22px; }
.tools .bar { margin: 0 7px 0 6px; height: 18px; }
.tools .tall { height: 34px; margin: 0 13px; }

.tb-header { height: 64px; flex: none; background: #f57c00; display: flex; align-items: center; font-family: Roboto, sans-serif; color: #fff; padding: 0 24px 0 26px; position: relative; z-index: 2; box-shadow: 0 2px 5px rgba(0,0,0,.45); }
.brand { font-size: 20px; font-weight: 500; width: 236px; letter-spacing: -.5px; }
.tb-tabs { display: flex; height: 64px; flex: 1; font-size: 14px; font-weight: 500; letter-spacing: .07px; }
.tb-tabs span { padding: 0 15.600px; line-height: 64px; color: rgba(255,255,255,.78); }
.tb-tabs .on { color: #fff; border-bottom: 2px solid #fff; }
.tb-icons { display: flex; gap: 16px; }

.content { flex: 1; display: flex; min-height: 0; }
.side { position: relative; width: 248px; flex: none; background: #f5f5f5; padding: 20px 0 0 30px; font-family: Roboto, sans-serif; overflow: hidden; }
.act { display: flex; height: 30px; align-items: center; font-size: 14px; color: #808080; gap: 22px; letter-spacing: -.02px; }
.act i { width: 11px; height: 30px; background: #f0f0f0; margin-left: -15px; }
.field { display: flex; color: #000; font-size: 16px; line-height: 20px; letter-spacing: -.05px; }
.field small { font-size: 13.500px; color: #808080; }
.run { height: 54px; padding-top: 7px; }
.sess { height: 50px; padding-top: 7px; line-height: 19px; }
.drop { height: 18px; border-bottom: 1px solid #737373; display: flex; justify-content: space-between; align-items: center; font-size: 12px; color: #808080; padding-right: 3px; }
.drop svg { margin-top: 2px; }
.run .lab { width: 67px; }
.sess .lab { width: 98px; }
.w121 { width: 121px; }
.w90 { width: 90px; }
.upload { height: 39px; padding-top: 7px; }
.upload .lab { width: 58px; padding-top: 4px; }
.choose { width: 127px; height: 25px; border-radius: 2px; box-shadow: 0 1px 3px rgba(0,0,0,.5); font-size: 12px; line-height: 29px; text-align: center; color: #808080; letter-spacing: .02px; }
.trace { height: 28px; padding-top: 1px; }
.trace .lab { width: 109px; }
.toggle { position: relative; width: 35px; height: 14px; margin-top: 2px; border-radius: 7px; background: #919191; }
.toggle::before { content: ""; position: absolute; left: -1px; top: -3px; width: 20px; height: 20px; border-radius: 50%; background: #fafafa; box-shadow: 0 1px 4px rgba(0,0,0,.6); }
.color { height: 96px; }
.color .lab { width: 47px; padding-top: 1px; }
.radios { list-style: none; margin: -2px 0 0; padding: 0; letter-spacing: 0; }
.radios li { display: flex; align-items: center; height: 26px; gap: 10px; font-size: 12px; color: #707070; letter-spacing: .04px; }
.radios li::before { content: ""; width: 16px; height: 16px; border: 2px solid #808080; border-radius: 50%; }
.radios .sel, .radios .dev { color: #212121; }
.radios .sel::before { border-color: #3f51b5; background: radial-gradient(circle, #3f51b5 4px, transparent 4.500px); }
.radios .dev::before { border-color: #212121; }
.swatches { position: absolute; left: 30px; top: 383px; display: grid; grid-template-columns: 60px auto; row-gap: 9px; font-size: 12px; line-height: 16px; color: #808080; letter-spacing: .08px; }
.swatches .uniq { grid-column: 2; }
.swatches i { position: absolute; left: 0; top: 25px; width: 37px; height: 17px; border: 2px solid #aaa; border-radius: 6px; background: #e4e4e4; }
.legend { position: relative; }
.lr { display: flex; height: 21px; line-height: 21px; font-size: 12px; color: #808080; white-space: nowrap; letter-spacing: .05px; }
.lr svg { overflow: visible; }
.lr b { color: #444; font-weight: 400; }
.r-title { height: 29px; }
.r-title b { width: 60px; font-size: 16px; color: #000; }
.r-title span { padding-top: 1px; }
.tallrow { height: 24px; line-height: 27px; }

.graph { flex: 1; background: #fff; }
.graph h1 { margin: 0; height: 46px; padding: 20px 0 0 20px; font: 400 20px/24px Roboto, sans-serif; color: #000; letter-spacing: .08px; }
.box { stroke: #c6c6bf; stroke-width: 1; }
.root { fill: #f5f4ee; }
.pink { fill: #f6edf0; }
.lilac { fill: #f0edf6; }
.teal { fill: #ecf5f3; }
.green { fill: #f0f5ed; }
.blue { fill: #edf0f6; stroke: #c2c5cc; }
.edges { fill: none; stroke: #bbb; stroke-width: .8; opacity: .8; }
.ticks { fill: none; stroke: #777; stroke-width: .7; stroke-dasharray: 2 .5; opacity: .7; }
.ops { fill: #fff; stroke: #b5b5b5; stroke-width: .6; }
.pill { stroke-width: .7; }
.p-green { fill: #b5dcc0; stroke: #8fae98; }
.p-purple { fill: #bdaee0; stroke: #9589b3; }
.p-mag { fill: #e8a9e8; stroke: #b98bb9; }
.p-lav { fill: #c3b3e2; stroke: #988db0; }
.p-rose { fill: #f3a0b8; stroke: #c08294; }
.p-orange { fill: #f3b797; stroke: #bd9480; }
.dots { fill: #f0913a; }
.lbl { font: 5.300px Roboto, sans-serif; fill: #333; text-anchor: middle; }
.sm { font-size: 4.200px; }
.xs { font-size: 3.600px; }

.notice { height: 29px; flex: none; display: flex; align-items: center; background: #f1f0ee; color: #3f3f3f; font-size: 14.500px; padding: 0 7px 0 6px; gap: 7px; z-index: 1; }
.msg { flex: 1; letter-spacing: 0; white-space: nowrap; padding-bottom: 1px; }
.info-i { font: italic 700 12px "Liberation Serif", serif; fill: #fff; text-anchor: middle; }
.share { width: 150px; height: 25px; border: 1px solid #aba8a4; border-radius: 4px; background: linear-gradient(#fff, #f2f1f0); line-height: 23px; text-align: center; white-space: nowrap; letter-spacing: -.1px; margin-right: 6px; }
.share u { text-underline-offset: 3px; }
```
